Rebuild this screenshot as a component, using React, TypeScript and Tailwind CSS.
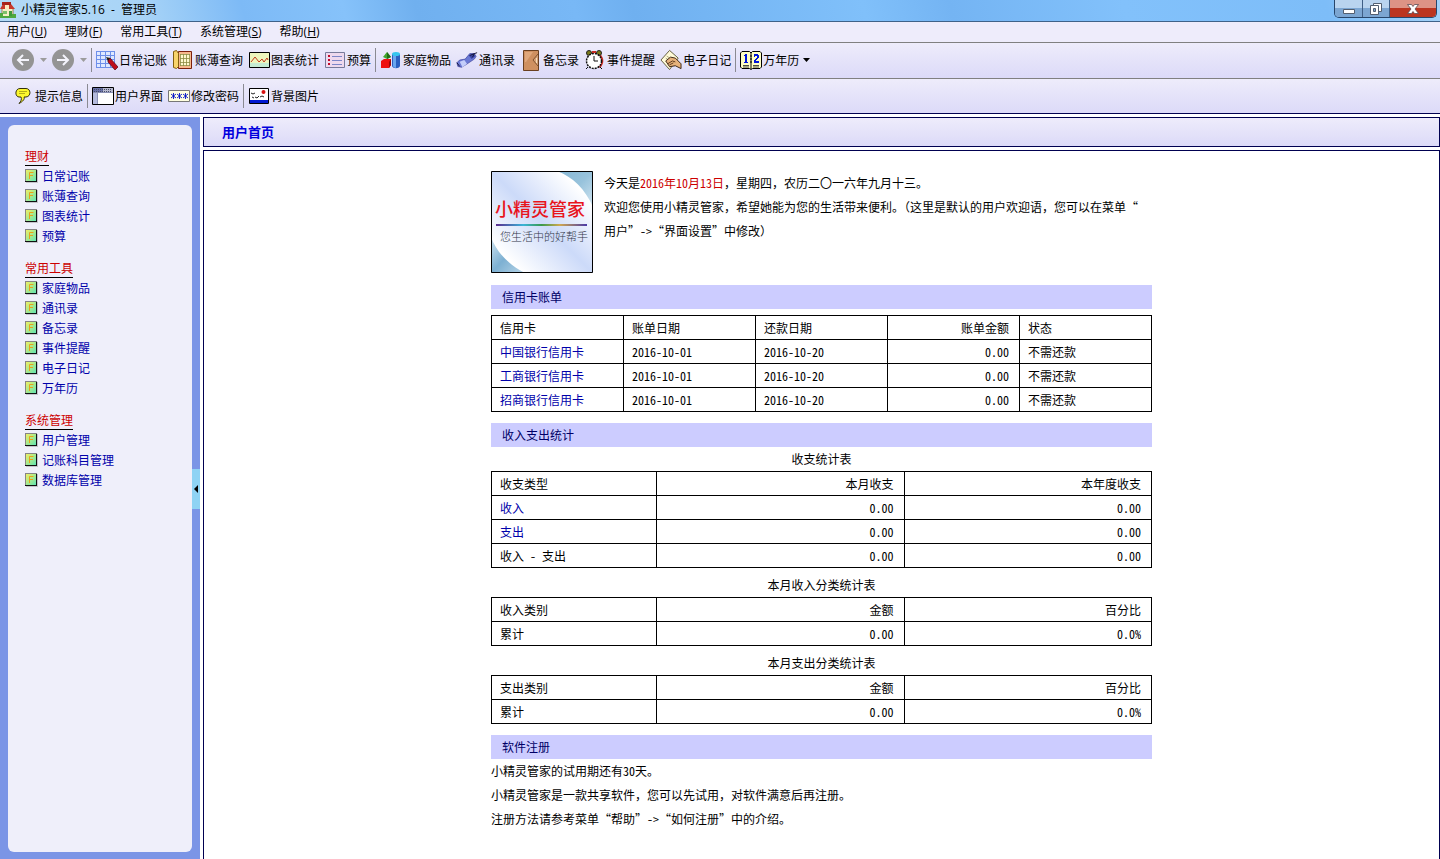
import type { ReactNode } from 'react'

interface NavGroup {
  title: string
  items: string[]
}

const menus = [
  { label: '用户', hotkey: 'U' },
  { label: '理财', hotkey: 'F' },
  { label: '常用工具', hotkey: 'T' },
  { label: '系统管理', hotkey: 'S' },
  { label: '帮助', hotkey: 'H' },
]

const navGroups: NavGroup[] = [
  { title: '理财', items: ['日常记账', '账薄查询', '图表统计', '预算'] },
  { title: '常用工具', items: ['家庭物品', '通讯录', '备忘录', '事件提醒', '电子日记', '万年历'] },
  { title: '系统管理', items: ['用户管理', '记账科目管理', '数据库管理'] },
]

const cards = ['中国银行信用卡', '工商银行信用卡', '招商银行信用卡']

/* ---------- icons ---------- */

function HouseIcon() {
  return (
    <svg width="16" height="16" viewBox="0 0 16 16">
      <path d="M2 6h11v9H2z" fill="#f5efc6" stroke="#8a6a3c" strokeWidth=".8" />
      <path d="M0 7l3-5h8l4 5z" fill="#c8382a" />
      <path d="M2 3V0h9v3z" fill="#a8241a" />
      <path d="M5 3h4v4H5z" fill="#fbe9c0" />
      <path d="M9 9h3v6H9z" fill="#3f9a3a" />
      <path d="M3 9h4v3H3z" fill="#7cc06a" />
      <path d="M0 11h3v5H0zM12 12h4v4h-4zM3 14h9v2H3z" fill="#4fa83f" />
    </svg>
  )
}

function LedgerIcon() {
  return (
    <svg width="22" height="20" viewBox="0 0 22 20">
      <path d="M0 1h19v17H0z" fill="#dfe8ff" />
      <path d="M.5 1v17M4.500 1v17M9.500 1v17M14.500 1v17M18.500 1v17M0 1.500h19M0 5.500h19M0 9.500h19M0 13.500h19M0 17.500h19" stroke="#6d8fea" />
      <path d="M12 9l2-1 8 9-3 3-7-8z" fill="#c00d1c" stroke="#4c0a14" strokeWidth=".7" />
      <path d="M10 7l4 1-2 3z" fill="#221" />
    </svg>
  )
}

function BookIcon() {
  return (
    <svg width="20" height="20" viewBox="0 0 20 20">
      <path d="M5.500 1.500h13v17h-13z" fill="#f6b98d" stroke="#7d200c" />
      <path d="M.5 1.500L3.500.5l2 3v13l-2 2-3-1z" fill="#f8d46c" stroke="#84600e" />
      <path d="M7 4h10v12H7z" fill="#fff9ce" />
      <path d="M7.500 4v12M10.500 4v12M13.500 4v12M16.500 4v12M7 4.500h10M7 8.500h10M7 12.500h10M7 15.500h10" stroke="#8d8b42" strokeWidth=".8" />
    </svg>
  )
}

function ChartIcon() {
  return (
    <svg width="21" height="16" viewBox="0 0 21 16">
      <path d="M.5.5h20v15H.5z" fill="#eef6bd" stroke="#000" />
      <path d="M1 11h19v4H1z" fill="#c5ecd3" />
      <path d="M2 10l4-5 4 5 3-3 2 3 3-4 1 2" fill="none" stroke="#c23a1c" />
    </svg>
  )
}

function BudgetIcon() {
  return (
    <svg width="20" height="16" viewBox="0 0 20 16">
      <path d="M.5.5h19v15H.5z" fill="#eed9ee" stroke="#777a9a" />
      <path d="M3 3h2v2H3zM3 7h2v2H3zM3 11h2v2H3z" fill="#c00a2a" />
      <path d="M7 4.500h10M7 8.500h10M7 12.500h10" stroke="#7c86c8" />
    </svg>
  )
}

function GoodsIcon() {
  return (
    <svg width="20" height="18" viewBox="0 0 20 18">
      <path d="M2 6l4-5 4 5-4 2z" fill="#41a62c" />
      <path d="M6 1l4 5-4 2z" fill="#236c18" />
      <path d="M0 10l3-2h7v6l-2 3H0z" fill="#ee1111" />
      <path d="M10 8v6l-2 3v-6z" fill="#9c0808" />
      <path d="M11 3h8v12c-1 3-7 3-8 0z" fill="#2a5fc0" />
      <path d="M12 4h3v13c-1 0-3-1-3-2z" fill="#6aa6ee" />
      <ellipse cx="15" cy="3" rx="4" ry="2" fill="#35c5ee" />
    </svg>
  )
}

function ContactsIcon() {
  return (
    <svg width="24" height="18" viewBox="0 0 24 18">
      <path d="M1 12l3-3 6-1 5-6h5l2 3-2 3-9 6-5 3-4-1z" fill="#6a78d4" stroke="#3a3f9a" strokeWidth=".7" />
      <path d="M4 11l5-2 3 4-5 4z" fill="#c3cdfa" />
      <path d="M14 4l5-2 2 3-4 3z" fill="#3a44a4" />
      <path d="M1 12l3 4M15 4l8-3M18 6l2-4" stroke="#101030" />
    </svg>
  )
}

function MemoIcon() {
  return (
    <svg width="17" height="21" viewBox="0 0 17 21">
      <path d="M.5.5h15v20H.5z" fill="#cf9060" stroke="#6a4020" />
      <path d="M2 2h8L3 12H2z" fill="#e0a87c" />
      <path d="M15 4l-5 6 5 6" fill="#d7a075" stroke="#6a4020" strokeWidth=".8" />
      <path d="M13.500 8v5" stroke="#f6dcb8" />
    </svg>
  )
}

function AlarmIcon() {
  return (
    <svg width="20" height="20" viewBox="0 0 20 20">
      <path d="M12 3c7 2 8 9 4 14l-3 1z" fill="#c82a22" />
      <circle cx="4" cy="3" r="2.500" fill="#7b7a19" stroke="#222" />
      <circle cx="14" cy="3" r="2.500" fill="#7b7a19" stroke="#222" />
      <circle cx="9" cy="11" r="7.500" fill="#fff" stroke="#111" strokeWidth="1.500" strokeDasharray="2 1" />
      <path d="M9 6v5h4M3 17l-2 2M15 17l2 2" fill="none" stroke="#111" />
      <path d="M7 1h4v2H7z" fill="#c82a22" />
    </svg>
  )
}

function DiaryIcon() {
  return (
    <svg width="23" height="22" viewBox="0 0 23 22">
      <path d="M10 1l9 8-9 12L1 11z" fill="#fffbd8" stroke="#5f5a3a" />
      <path d="M7 7l5 3M6 9l3 2" stroke="#aaa67a" />
      <path d="M6 12l5-4 5 1 6 6v5l-6-3-6 1z" fill="#e7b27b" stroke="#3a2412" />
      <path d="M8 15l5-3 3 1M10 16l4-2" fill="none" stroke="#5a3618" />
    </svg>
  )
}

function CalendarIcon() {
  return (
    <svg width="22" height="19" viewBox="0 0 22 19">
      <path d="M2 .5h7.500L11 2 12.500.5H20L21.500 2v14L20 17.500h-7.500L11 18.500l-1.500-1H2L.5 16V2z" fill="#ffffc4" stroke="#000" />
      <path d="M11 2v16" stroke="#000" />
      <path d="M5 3h2v8h1v1H4v-1h1V5H4V4h1zM14 3h4v1h1v3h-1v1h-1v1h-1v1h3v2h-5v-3h1V8h1V7h1V5h-2v1h-1z" fill="#0015dc" />
      <path d="M3 14.500h6M3 16h6M13 14.500h6M13 16h6" stroke="#222" strokeWidth=".8" />
      <path d="M10 5h2M10 8h2M10 11h2" stroke="#000" />
    </svg>
  )
}

function BubbleIcon() {
  return (
    <svg width="16" height="16" viewBox="0 0 16 16">
      <path d="M5 .5h6c5 0 5.500 8 0 8.500H9c1 2-1 4.500-5 6.500 2-2 3-4.500 2-6.500H4C-.5 8.500 0 .5 5 .5z" fill="#fcf72c" stroke="#33300a" />
      <path d="M4 3.500h8M4 5.500h6" stroke="#b5ae18" />
    </svg>
  )
}

function LayoutIcon() {
  return (
    <svg width="22" height="18" viewBox="0 0 22 18">
      <path d="M.5.5h21v17H.5z" fill="#fff" stroke="#000" />
      <path d="M1 1h20v4H1z" fill="#b7b9cf" />
      <path d="M1 1h10v4H1z" fill="#6a72a8" />
      <path d="M1 6h4v11H1z" fill="#b4badc" />
      <path d="M2 2.500h17M2 4.500h17" stroke="#444a66" strokeDasharray="1 1" />
      <path d="M5.500 6v11M1 5.500h20" stroke="#8a90b4" />
    </svg>
  )
}

function PasswordIcon() {
  return (
    <svg width="22" height="12" viewBox="0 0 22 12">
      <path d="M.5.5h21v11H.5z" fill="#ffffe0" stroke="#777" />
      <path d="M5.500 3v6M3 4l5 4M8 4L3 8M11.500 3v6M9 4l5 4M14 4L9 8M17.500 3v6M15 4l5 4M20 4l-5 4" stroke="#0010c8" strokeWidth=".9" />
    </svg>
  )
}

function PictureIcon() {
  return (
    <svg width="20" height="16" viewBox="0 0 20 16">
      <path d="M.5.5h19v15H.5z" fill="#fff" stroke="#000" />
      <path d="M1 12h18v3H1z" fill="#0018d0" />
      <circle cx="14.500" cy="4" r="2" fill="#d81010" />
      <path d="M2 5l2 1 2-1M6 9l2 1 2-2M11 9l2-1 2 1M3 9l2 1" fill="none" stroke="#222" />
    </svg>
  )
}

function ArrowCircle({ back }: { back?: boolean }) {
  return (
    <svg width="22" height="22" viewBox="0 0 22 22">
      <circle cx="11" cy="11" r="11" fill="#949494" />
      <path
        d={back ? 'M17 11H6M11 6l-5 5 5 5' : 'M5 11h11M11 6l5 5-5 5'}
        fill="none"
        stroke="#f4f4fb"
        strokeWidth="2"
      />
    </svg>
  )
}

function Caret({ className }: { className: string }) {
  return (
    <svg width="7" height="4" viewBox="0 0 7 4" className={className}>
      <path d="M0 0h7L3.500 4z" fill="currentColor" />
    </svg>
  )
}

function ItemIcon() {
  return (
    <svg width="13" height="14" viewBox="0 0 13 14">
      <defs>
        <linearGradient id="tile" x1="0" y1="0" x2="1" y2="1">
          <stop offset="0" stopColor="#f0ef66" />
          <stop offset="1" stopColor="#5fe4b4" />
        </linearGradient>
      </defs>
      <path d="M1 1h12v13H1z" fill="#c4c4cc" />
      <path d="M0 0h12v13H0z" fill="#111" />
      <path d="M0 0h12v1H1v11H0z" fill="#858585" />
      <path d="M1 1h10v11H1z" fill="url(#tile)" />
      <path d="M4.500 10V3.500H8.500M4 6.500h4" fill="none" stroke="#e8a01c" />
    </svg>
  )
}

/* ---------- small parts ---------- */

function Separator() {
  return <div className="-mx-px h-6 w-px shrink-0 bg-[#8a8a92]" />
}

function ToolButton({ icon, label, caret }: { icon: ReactNode; label: string; caret?: boolean }) {
  return (
    <button type="button" className="flex shrink-0 items-center gap-px whitespace-nowrap">
      <span className="flex w-[22px] justify-center">{icon}</span>
      {label}
      {caret && <Caret className="ml-[3px] text-black" />}
    </button>
  )
}

function SectionBar({ children }: { children: ReactNode }) {
  return <h2 className="h-6 bg-[#ccccff] pl-[11px] text-[#000066]">{children}</h2>
}

function StatTable({ caption, head, rows, linked }: { caption: string; head: string[]; rows: string[][]; linked?: string[] }) {
  return (
    <table className="w-full table-fixed border-collapse leading-5">
      <caption className="h-6 leading-6">{caption}</caption>
      <thead>
        <tr className="h-6">
          {head.map((h, i) => (
            <th
              key={h}
              className={`border border-black p-0 font-normal ${i === 0 ? 'w-1/4 pl-2 text-left' : 'pr-[10px] text-right'}`}
            >
              {h}
            </th>
          ))}
        </tr>
      </thead>
      <tbody>
        {rows.map((row) => (
          <tr key={row[0]} className="h-6">
            {row.map((cell, i) => (
              <td key={i} className={`border border-black p-0 ${i === 0 ? 'pl-2' : 'pr-[10px] text-right'}`}>
                {i === 0 && linked?.includes(cell) ? (
                  <a href="#" className="text-[#0000aa]">{cell}</a>
                ) : (
                  cell
                )}
              </td>
            ))}
          </tr>
        ))}
      </tbody>
    </table>
  )
}

function Banner() {
  return (
    <svg width="102" height="102" viewBox="0 0 102 102" className="shrink-0" role="img" aria-label="小精灵管家">
      <defs>
        <linearGradient id="sky" x1="0" y1="1" x2="1" y2="0">
          <stop offset=".15" stopColor="#ffffff" />
          <stop offset=".5" stopColor="#ccdaf9" />
          <stop offset=".85" stopColor="#ffffff" />
        </linearGradient>
        <linearGradient id="cornerTop" x1="0" y1="0" x2="1" y2="1">
          <stop offset="0" stopColor="#86b6d4" />
          <stop offset=".5" stopColor="#98c3dc" />
          <stop offset="1" stopColor="#d2e5f1" />
        </linearGradient>
        <linearGradient id="cornerBottom" x1="0" y1="0" x2="1" y2="1">
          <stop offset="0" stopColor="#d2e5f1" />
          <stop offset=".5" stopColor="#7db0d2" />
          <stop offset="1" stopColor="#b8d5e8" />
        </linearGradient>
        <linearGradient id="rainbow">
          <stop offset="0" stopColor="#5b2d90" />
          <stop offset=".3" stopColor="#3bb4d8" />
          <stop offset=".5" stopColor="#3a9a4c" />
          <stop offset=".7" stopColor="#d0a850" />
          <stop offset="1" stopColor="#4a3aa8" />
        </linearGradient>
      </defs>
      <path d="M0 0h102v102H0z" fill="url(#sky)" />
      <path d="M66 0c16 6 28 18 36 36V0z" fill="url(#cornerTop)" />
      <path d="M0 66c6 16 18 28 34 36H0z" fill="url(#cornerBottom)" />
      <rect x="5" y="53" width="91" height="2" fill="url(#rainbow)" />
      <text x="4" y="45" fontSize="18" fontWeight="500" fill="#e8141c" fontFamily="'Noto Sans CJK SC', sans-serif">
        小精灵管家
      </text>
      <text x="9" y="70" fontSize="11" fontWeight="300" fill="#33384a" fontFamily="'Noto Sans CJK SC', sans-serif">
        您生活中的好帮手
      </text>
      <path d="M.5.5h101v101H.5z" fill="none" stroke="#000" />
    </svg>
  )
}

export default function App() {
  return (
    <div className="flex min-h-screen flex-col bg-white font-['Noto_Sans_Mono_CJK_SC','Noto_Sans_CJK_SC',sans-serif] text-xs text-black">
      {/* Title bar */}
      <header className="flex h-[22px] items-start justify-between border-b border-[#3f6289] bg-[linear-gradient(75deg,#b4daf6_0%,#a8d4f7_10%,#7dbaf6_17%,#86c2fa_24%,#70b0ef_29%,#78b8f6_40%,#6fb0f0_44%,#80c0fa_60%,#74b4f3_66%,#82c1fb_78%,#7dbdf8_92%,#a4d2f8_100%)] font-['Open_Sans','Noto_Sans_CJK_SC',sans-serif]">
        <div className="flex h-5 items-center gap-[5px] whitespace-pre">
          <HouseIcon />
          <h1>小精灵管家5.16  -  管理员</h1>
        </div>
        <div className="mr-[3px] flex h-[18px] overflow-hidden rounded-b-[5px] border border-t-0 border-[#27466b]">
          <button type="button" aria-label="最小化" className="flex w-7 items-center justify-center border-r border-[#3f5f86] bg-linear-to-b from-[#b9d4ef] from-45% to-[#7ca6d2] to-50%">
            <svg width="12" height="12" viewBox="0 0 12 12">
              <path d="M.5 6.500h11v4H.5z" fill="#fff" stroke="#535f70" />
            </svg>
          </button>
          <button type="button" aria-label="还原" className="flex w-[27px] items-center justify-center border-r border-[#3f5f86] bg-linear-to-b from-[#b9d4ef] from-45% to-[#7ca6d2] to-50%">
            <svg width="12" height="12" viewBox="0 0 12 12">
              <path d="M3.500.5h8v8h-8z" fill="#fff" stroke="#535f70" />
              <path d="M.5 2.500h8v9h-8z" fill="#fff" stroke="#535f70" />
              <path d="M3.500 5.500h2v3h-2z" fill="#7ca6d2" stroke="#535f70" />
            </svg>
          </button>
          <button type="button" aria-label="关闭" className="flex w-[46px] items-center justify-center bg-linear-to-b from-[#dd9385] from-45% to-[#bb3520] to-50%">
            <svg width="12" height="10" viewBox="0 0 12 10">
              <path d="M.5.5h4L6 2.500 7.500.5h4L8 5l3.500 4.500h-4L6 7.500 4.500 9.500h-4L4 5z" fill="#fff" stroke="#5b4a52" strokeWidth=".8" />
            </svg>
          </button>
        </div>
      </header>

      {/* Menu bar */}
      <nav className="flex h-[21px] items-center gap-[18px] border-b border-[#808080] bg-[#eeecfb] pl-[7px] font-['Open_Sans','Noto_Sans_CJK_SC',sans-serif]">
        {menus.map((m) => (
          <button key={m.label} type="button" className="whitespace-nowrap">
            {m.label}(<span className="underline">{m.hotkey}</span>)
          </button>
        ))}
      </nav>

      {/* Toolbars */}
      <div className="flex h-9 items-center gap-[5px] border-b border-[#808080] bg-linear-to-b from-[#eeecfb] to-[#dcdaf8] pb-px pl-3">
        <button type="button" aria-label="后退" className="flex items-center gap-[6px]">
          <ArrowCircle back />
          <Caret className="text-[#9c9c9c]" />
        </button>
        <button type="button" aria-label="前进" className="flex items-center gap-[6px]">
          <ArrowCircle />
          <Caret className="text-[#9c9c9c]" />
        </button>
        <Separator />
        <ToolButton icon={<LedgerIcon />} label="日常记账" />
        <ToolButton icon={<BookIcon />} label="账薄查询" />
        <ToolButton icon={<ChartIcon />} label="图表统计" />
        <ToolButton icon={<BudgetIcon />} label="预算" />
        <Separator />
        <ToolButton icon={<GoodsIcon />} label="家庭物品" />
        <ToolButton icon={<ContactsIcon />} label="通讯录" />
        <ToolButton icon={<MemoIcon />} label="备忘录" />
        <ToolButton icon={<AlarmIcon />} label="事件提醒" />
        <ToolButton icon={<DiaryIcon />} label="电子日记" />
        <Separator />
        <ToolButton icon={<CalendarIcon />} label="万年历" caret />
      </div>
      <div className="flex h-[35px] items-center gap-[5px] border-b border-[#000050] bg-linear-to-b from-[#eeecfb] to-[#dcdaf8] pl-3">
        <ToolButton icon={<BubbleIcon />} label="提示信息" />
        <Separator />
        <ToolButton icon={<LayoutIcon />} label="用户界面" />
        <ToolButton icon={<PasswordIcon />} label="修改密码" />
        <Separator />
        <ToolButton icon={<PictureIcon />} label="背景图片" />
      </div>

      <div className="flex flex-1 gap-[3px] pt-[3px]">
        {/* Sidebar */}
        <aside className="flex w-[200px] shrink-0 bg-[#7b95e6] pt-2 pb-[7px] pl-2">
          <div className="flex flex-1 flex-col gap-3 rounded-md bg-[#efeffa] pt-[21px] pl-[17px] leading-5">
            {navGroups.map((group) => (
              <div key={group.title}>
                <h2 className="flex h-5">
                  <span className="border-b border-black text-[#cc0000]">{group.title}</span>
                </h2>
                <ul>
                  {group.items.map((item) => (
                    <li key={item}>
                      <a href="#" className="flex h-5 items-center gap-1 text-[#0000aa]">
                        <ItemIcon />
                        {item}
                      </a>
                    </li>
                  ))}
                </ul>
              </div>
            ))}
          </div>
          <button type="button" aria-label="收起" className="flex h-10 w-2 items-center justify-center self-center bg-[#8ed3f4]">
            <svg width="4" height="8" viewBox="0 0 4 8">
              <path d="M4 0v8L0 4z" fill="#000" />
            </svg>
          </button>
        </aside>

        {/* Main area */}
        <main className="flex flex-1 flex-col gap-[3px]">
          <div className="flex h-[30px] items-center border border-[#000050] bg-linear-to-b from-[#eeecfb] to-[#dcdaf8] pl-[18px] text-[13px] font-bold text-[#0000dd]">
            用户首页
          </div>
          <div className="flex-1 border border-b-0 border-[#000050] pt-5 leading-6">
            <div className="mx-auto w-full max-w-[661px]">
              <div className="mb-3 flex items-start gap-[11px]">
                <Banner />
                <div>
                  <p>
                    今天是<span className="text-[#cc0000]">2016年10月13日</span>，星期四，农历二〇一六年九月十三。
                  </p>
                  <p>
                    欢迎您使用小精灵管家，希望她能为您的生活带来便利。（这里是默认的用户欢迎语，您可以在菜单“
                    <br />
                    用户”-&gt;“界面设置”中修改）
                  </p>
                </div>
              </div>

              <SectionBar>信用卡账单</SectionBar>
              <table className="mt-[6px] mb-[11px] w-full table-fixed border-collapse leading-5">
                <thead>
                  <tr className="h-6 text-left">
                    <th className="border border-black p-0 pl-2 font-normal">信用卡</th>
                    <th className="border border-black p-0 pl-2 font-normal">账单日期</th>
                    <th className="border border-black p-0 pl-2 font-normal">还款日期</th>
                    <th className="border border-black p-0 pr-[10px] text-right font-normal">账单金额</th>
                    <th className="border border-black p-0 pl-2 font-normal">状态</th>
                  </tr>
                </thead>
                <tbody>
                  {cards.map((card) => (
                    <tr key={card} className="h-6">
                      <td className="border border-black p-0 pl-2">
                        <a href="#" className="text-[#0000aa]">{card}</a>
                      </td>
                      <td className="border border-black p-0 pl-2">2016-10-01</td>
                      <td className="border border-black p-0 pl-2">2016-10-20</td>
                      <td className="border border-black p-0 pr-[10px] text-right">0.00</td>
                      <td className="border border-black p-0 pl-2">不需还款</td>
                    </tr>
                  ))}
                </tbody>
              </table>

              <SectionBar>收入支出统计</SectionBar>
              <div className="mb-[11px] flex flex-col gap-[5px]">
                <StatTable
                  caption="收支统计表"
                  head={['收支类型', '本月收支', '本年度收支']}
                  rows={[
                    ['收入', '0.00', '0.00'],
                    ['支出', '0.00', '0.00'],
                    ['收入 - 支出', '0.00', '0.00'],
                  ]}
                  linked={['收入', '支出']}
                />
                <StatTable
                  caption="本月收入分类统计表"
                  head={['收入类别', '金额', '百分比']}
                  rows={[['累计', '0.00', '0.0%']]}
                />
                <StatTable
                  caption="本月支出分类统计表"
                  head={['支出类别', '金额', '百分比']}
                  rows={[['累计', '0.00', '0.0%']]}
                />
              </div>

              <SectionBar>软件注册</SectionBar>
              <p>小精灵管家的试用期还有30天。</p>
              <p>小精灵管家是一款共享软件，您可以先试用，对软件满意后再注册。</p>
              <p>注册方法请参考菜单“帮助”-&gt;“如何注册”中的介绍。</p>
            </div>
          </div>
        </main>
      </div>
    </div>
  )
}
